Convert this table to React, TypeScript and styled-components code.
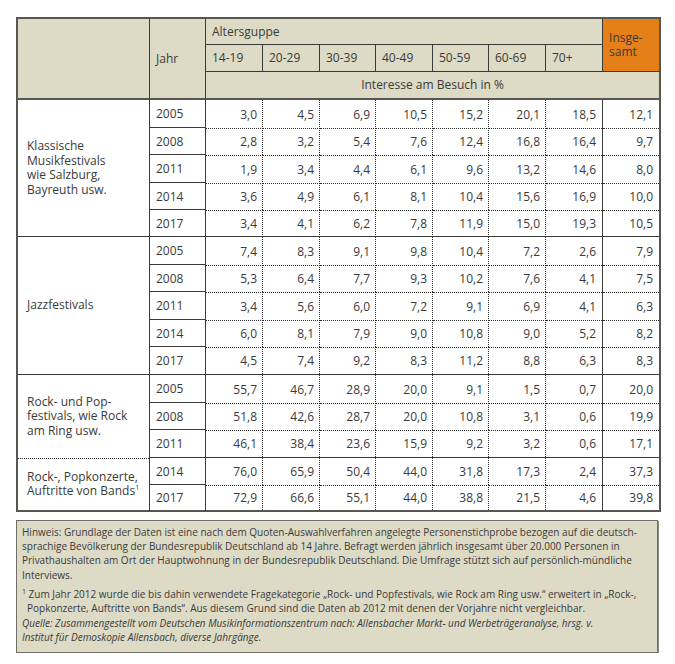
import React from 'react';
import styled, { createGlobalStyle, css } from 'styled-components';

const Global = createGlobalStyle`
  html, body { margin: 0; padding: 0; background: #ffffff; }
  body { font-family: "Open Sans", "Noto Sans", sans-serif; color: #3a3a3a; }
`;

const OUTER = '2px solid #575752';
const SOLID = '1px solid #3a3a3a';
const BEIGE = '#dddac6';
const DOT = '#2a2a2a';

type Line = 'dot' | 'solid' | 'outer' | 'none';

const lineCss = (side: 'right' | 'bottom', l: Line) => {
  if (l === 'outer') return `border-${side}: ${OUTER};`;
  if (l === 'solid') return `border-${side}: ${SOLID};`;
  return '';
};

const dotRight = `background: linear-gradient(to bottom, ${DOT} 50%, transparent 50%) right top / 1px 2px repeat-y;`;

const dotTopCss = css`
  &::after {
    content: '';
    position: absolute;
    left: 0;
    right: 0;
    top: 0;
    height: 0;
    border-top: 1px dotted ${DOT};
  }
`;

const Page = styled.div`
  padding: 17px 0 0 16px;
  width: 643px;
`;

const Table = styled.table`
  border-collapse: separate;
  border-spacing: 0;
  table-layout: fixed;
  width: 643px;
  border-top: ${OUTER};
  border-left: ${OUTER};
  font-size: 12px;
  color: #3a3a3a;
`;

const HeadCell = styled.th<{ $bg?: string; $align?: string; $bottom?: string; $right?: string }>`
  background: ${(p) => p.$bg || BEIGE};
  font-weight: 400;
  text-align: ${(p) => p.$align || 'left'};
  vertical-align: middle;
  padding: 0 6px;
  border-right: ${(p) => p.$right || SOLID};
  border-bottom: ${(p) => p.$bottom || SOLID};
  line-height: 14px;
`;

const HeadRow = styled.tr<{ $h: number }>`
  height: ${(p) => p.$h}px;
`;

const BodyRow = styled.tr<{ $h: number }>`
  height: ${(p) => p.$h}px;
`;

const LabelCell = styled.td<{ $bottom: Line; $dotTop?: boolean }>`
  position: relative;
  padding: 0 6px 0 9px;
  line-height: 14.5px;
  vertical-align: middle;
  border-right: ${SOLID};
  ${(p) => lineCss('bottom', p.$bottom)}
  ${(p) => (p.$dotTop ? dotTopCss : '')}
  sup { font-size: 7px; vertical-align: 5px; line-height: 0; }
`;

const YearCell = styled.td<{ $bottom: Line }>`
  padding: 0 6px;
  vertical-align: middle;
  border-right: ${SOLID};
  ${(p) => lineCss('bottom', p.$bottom)}
`;

const ValueCell = styled.td<{ $bottom: Line; $right: Line; $dotTop: boolean }>`
  position: relative;
  padding: 0 6px;
  text-align: right;
  vertical-align: middle;
  ${(p) => lineCss('right', p.$right)}
  ${(p) => lineCss('bottom', p.$bottom)}
  ${(p) => (p.$right === 'dot' ? dotRight : '')}
  ${(p) => (p.$dotTop ? dotTopCss : '')}
`;

const NoteBox = styled.div`
  margin-top: 8px;
  width: 630px;
  background: ${BEIGE};
  border: 1px solid #6f6f68;
  box-shadow: 1px 1px 0 #8c8c86;
  padding: 4px 5px 7px 5px;
  font-size: 10px;
  line-height: 14.2px;
  color: #3a3a3a;
`;

const NotePara = styled.p<{ $gap?: number; $italic?: boolean; $hang?: boolean }>`
  margin: ${(p) => p.$gap || 0}px 0 0 0;
  white-space: nowrap;
  font-style: ${(p) => (p.$italic ? 'italic' : 'normal')};
  padding-left: ${(p) => (p.$hang ? 5 : 0)}px;
  text-indent: ${(p) => (p.$hang ? -5 : 0)}px;
  sup { font-size: 7px; vertical-align: 4px; line-height: 0; }
`;

type Row = { year: string; v: string[]; h: number; breakBelow?: 'solid' | 'last' };
type Section = { label: React.ReactNode; labelBottom: Line; labelDotTop?: boolean; rows: Row[] };

const sections: Section[] = [
  {
    label: (
      <>
        Klassische<br />Musikfestivals<br />wie Salzburg,<br />Bayreuth usw.
      </>
    ),
    labelBottom: 'solid',
    rows: [
      { year: '2005', h: 28, v: ['3,0', '4,5', '6,9', '10,5', '15,2', '20,1', '18,5', '12,1'] },
      { year: '2008', h: 27, v: ['2,8', '3,2', '5,4', '7,6', '12,4', '16,8', '16,4', '9,7'] },
      { year: '2011', h: 28, v: ['1,9', '3,4', '4,4', '6,1', '9,6', '13,2', '14,6', '8,0'] },
      { year: '2014', h: 27, v: ['3,6', '4,9', '6,1', '8,1', '10,4', '15,6', '16,9', '10,0'] },
      { year: '2017', h: 27, v: ['3,4', '4,1', '6,2', '7,8', '11,9', '15,0', '19,3', '10,5'], breakBelow: 'solid' },
    ],
  },
  {
    label: <>Jazzfestivals</>,
    labelBottom: 'solid',
    rows: [
      { year: '2005', h: 28, v: ['7,4', '8,3', '9,1', '9,8', '10,4', '7,2', '2,6', '7,9'] },
      { year: '2008', h: 27, v: ['5,3', '6,4', '7,7', '9,3', '10,2', '7,6', '4,1', '7,5'] },
      { year: '2011', h: 28, v: ['3,4', '5,6', '6,0', '7,2', '9,1', '6,9', '4,1', '6,3'] },
      { year: '2014', h: 27, v: ['6,0', '8,1', '7,9', '9,0', '10,8', '9,0', '5,2', '8,2'] },
      { year: '2017', h: 28, v: ['4,5', '7,4', '9,2', '8,3', '11,2', '8,8', '6,3', '8,3'], breakBelow: 'solid' },
    ],
  },
  {
    label: (
      <>
        Rock- und Pop-<br />festivals, wie Rock<br />am Ring usw.
      </>
    ),
    labelBottom: 'none',
    rows: [
      { year: '2005', h: 28, v: ['55,7', '46,7', '28,9', '20,0', '9,1', '1,5', '0,7', '20,0'] },
      { year: '2008', h: 27, v: ['51,8', '42,6', '28,7', '20,0', '10,8', '3,1', '0,6', '19,9'] },
      { year: '2011', h: 28, v: ['46,1', '38,4', '23,6', '15,9', '9,2', '3,2', '0,6', '17,1'], breakBelow: 'solid' },
    ],
  },
  {
    label: (
      <>
        Rock-, Popkonzerte,<br />Auftritte von Bands<sup>1</sup>
      </>
    ),
    labelBottom: 'outer',
    labelDotTop: true,
    rows: [
      { year: '2014', h: 27, v: ['76,0', '65,9', '50,4', '44,0', '31,8', '17,3', '2,4', '37,3'] },
      { year: '2017', h: 27, v: ['72,9', '66,6', '55,1', '44,0', '38,8', '21,5', '4,6', '39,8'], breakBelow: 'last' },
    ],
  },
];

const ages = ['14-19', '20-29', '30-39', '40-49', '50-59', '60-69', '70+'];
const colWidths = [132, 56, 57, 57, 56, 57, 56, 57, 57, 58];

function bottomFor(r: Row): { year: Line; value: Line } {
  if (r.breakBelow === 'last') return { year: 'outer', value: 'outer' };
  if (r.breakBelow === 'solid') return { year: 'solid', value: 'solid' };
  return { year: 'solid', value: 'none' };
}

function rightFor(i: number): Line {
  if (i === 7) return 'outer';
  if (i === 6) return 'solid';
  return 'dot';
}

export default function App() {
  return (
    <>
      <Global />
      <Page>
        <Table>
          <colgroup>
            {colWidths.map((w, i) => (
              <col key={i} style={{ width: w }} />
            ))}
          </colgroup>
          <thead>
            <HeadRow $h={26}>
              <HeadCell rowSpan={3} $bottom={OUTER} />
              <HeadCell rowSpan={3} $bottom={OUTER}>Jahr</HeadCell>
              <HeadCell colSpan={7}>Altersguppe</HeadCell>
              <HeadCell rowSpan={2} $bg="#e57f18" $right={OUTER}>
                Insge-<br />samt
              </HeadCell>
            </HeadRow>
            <HeadRow $h={27}>
              {ages.map((a) => (
                <HeadCell key={a}>{a}</HeadCell>
              ))}
            </HeadRow>
            <HeadRow $h={28}>
              <HeadCell colSpan={8} $align="center" $bottom={OUTER} $right={OUTER}>
                Interesse am Besuch in %
              </HeadCell>
            </HeadRow>
          </thead>
          <tbody>
            {sections.map((s, si) =>
              s.rows.map((r, ri) => {
                const b = bottomFor(r);
                const dotTop = ri > 0;
                return (
                  <BodyRow key={`${si}-${ri}`} $h={r.h}>
                    {ri === 0 && (
                      <LabelCell rowSpan={s.rows.length} $bottom={s.labelBottom} $dotTop={s.labelDotTop}>
                        {s.label}
                      </LabelCell>
                    )}
                    <YearCell $bottom={b.year}>{r.year}</YearCell>
                    {r.v.map((v, vi) => (
                      <ValueCell key={vi} $bottom={b.value} $right={rightFor(vi)} $dotTop={dotTop}>
                        {v}
                      </ValueCell>
                    ))}
                  </BodyRow>
                );
              })
            )}
          </tbody>
        </Table>
        <NoteBox>
          <NotePara>
            Hinweis: Grundlage der Daten ist eine nach dem Quoten-Auswahlverfahren angelegte Personenstichprobe bezogen auf die deutsch-
            <br />
            sprachige Bevölkerung der Bundesrepublik Deutschland ab 14 Jahre. Befragt werden jährlich insgesamt über 20.000 Personen in
            <br />
            Privathaushalten am Ort der Hauptwohnung in der Bundesrepublik Deutschland. Die Umfrage stützt sich auf persönlich-mündliche
            <br />
            Interviews.
          </NotePara>
          <NotePara $gap={5} $hang>
            <sup>1</sup> Zum Jahr 2012 wurde die bis dahin verwendete Fragekategorie „Rock- und Popfestivals, wie Rock am Ring usw.“ erweitert in „Rock-,
            <br />
            Popkonzerte, Auftritte von Bands“. Aus diesem Grund sind die Daten ab 2012 mit denen der Vorjahre nicht vergleichbar.
          </NotePara>
          <NotePara $gap={1} $italic>
            Quelle: Zusammengestellt vom Deutschen Musikinformationszentrum nach: Allensbacher Markt- und Werbeträgeranalyse, hrsg. v.
            <br />
            Institut für Demoskopie Allensbach, diverse Jahrgänge.
          </NotePara>
        </NoteBox>
      </Page>
    </>
  );
}
